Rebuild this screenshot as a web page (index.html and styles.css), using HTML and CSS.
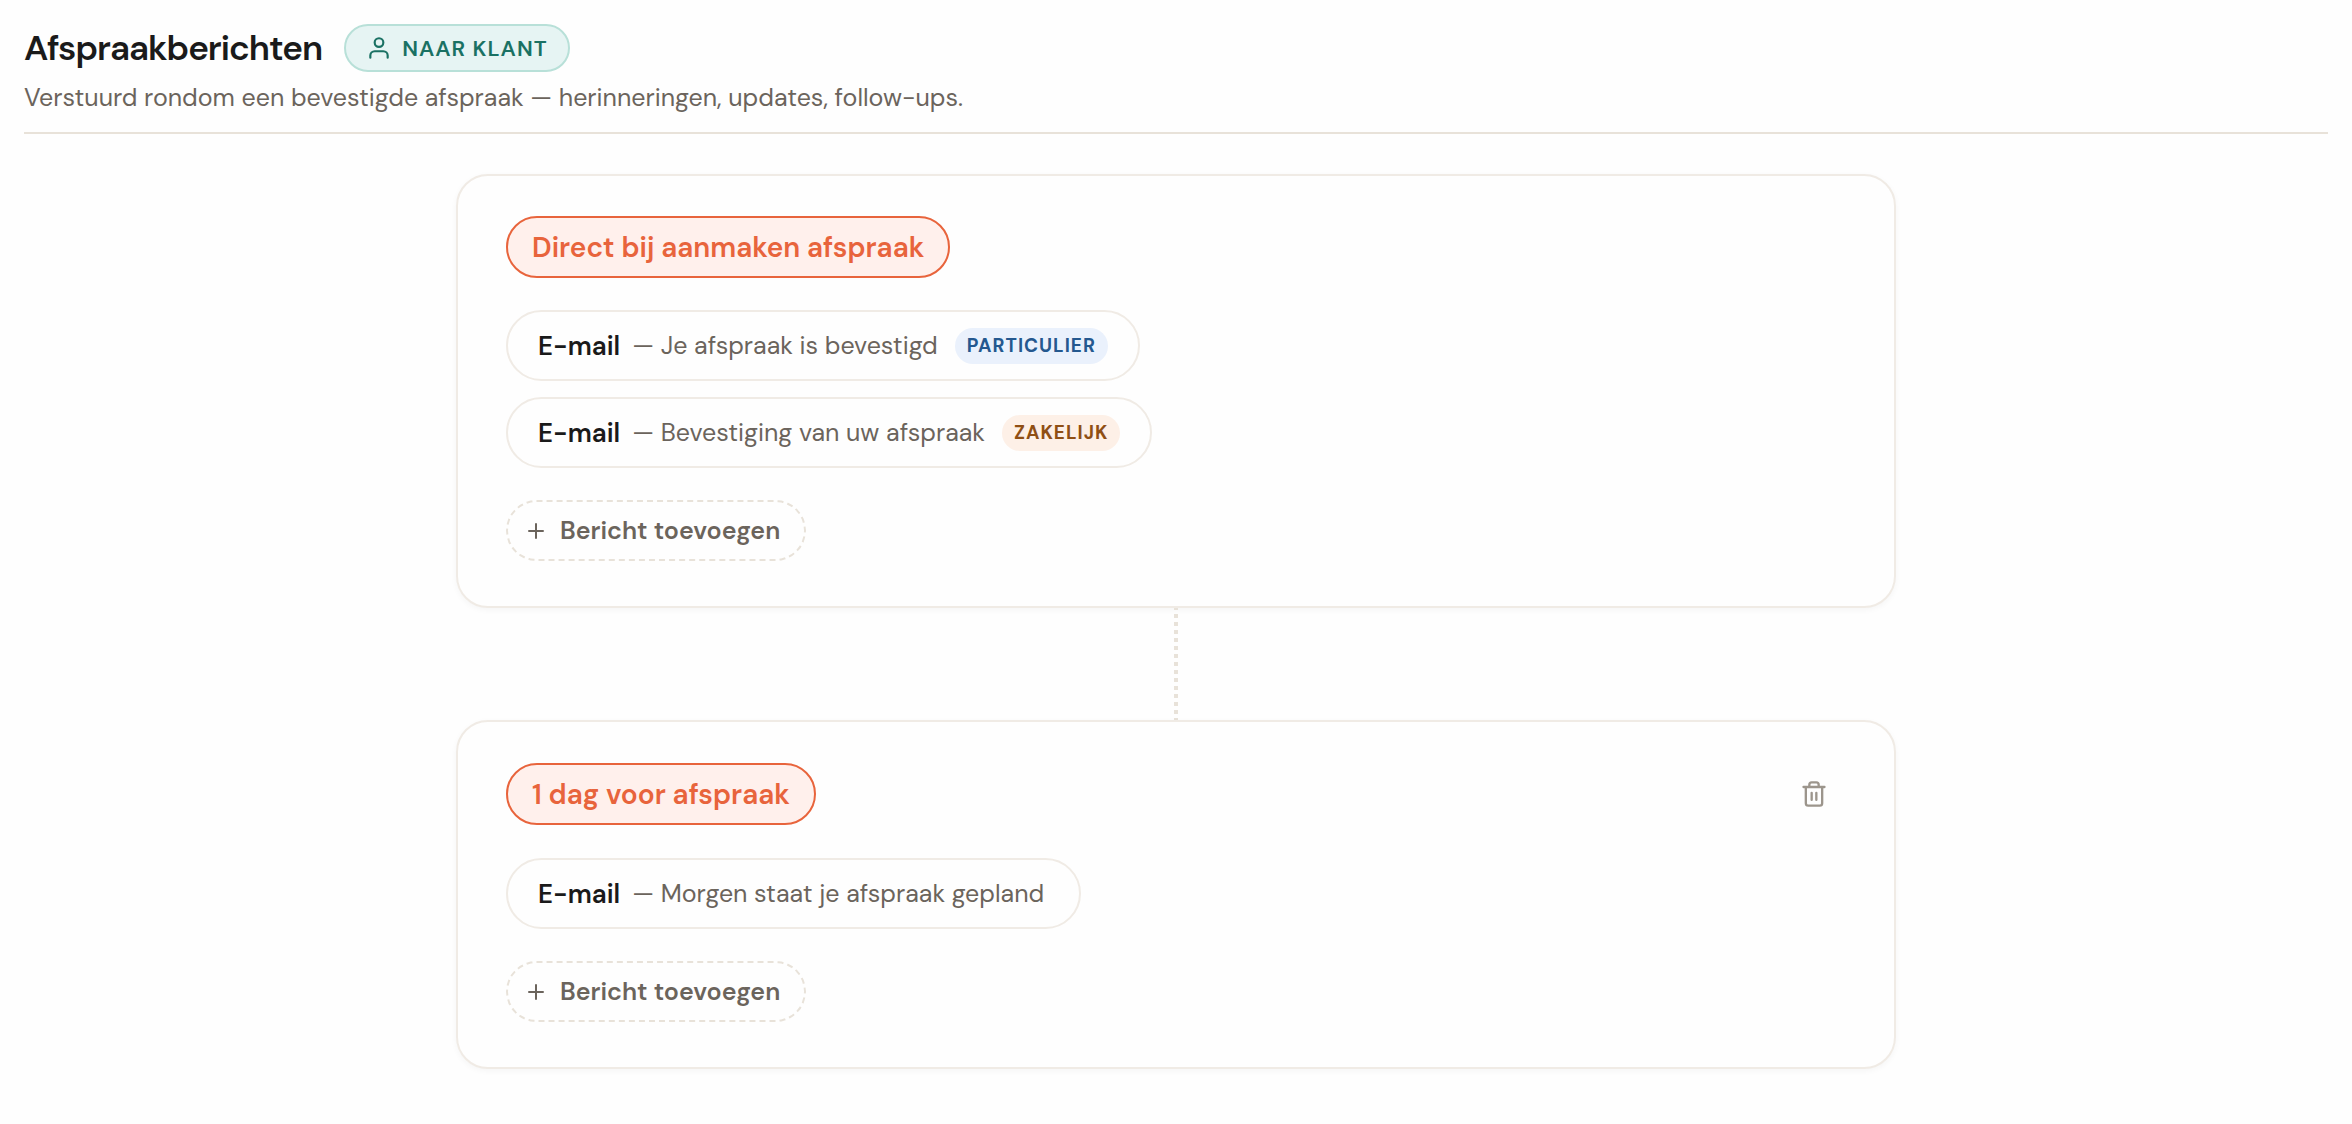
FILE: index.html
```html
<!DOCTYPE html>
<html lang="nl">
<head>
<meta charset="utf-8">
<meta name="viewport" content="width=device-width, initial-scale=1">
<title>Afspraakberichten</title>
<link rel="stylesheet" href="styles.css">
</head>
<body>
<main class="page">
  <header class="page-header">
    <div class="title-row">
      <h1 class="title">Afspraakberichten</h1>
      <span class="audience">
        <svg class="audience-icon" viewBox="0 0 24 24" aria-hidden="true"><path d="M20 21v-2a4 4 0 0 0-4-4H8a4 4 0 0 0-4 4v2"/><circle cx="12" cy="7" r="4"/></svg>
        NAAR KLANT
      </span>
    </div>
    <p class="subtitle">Verstuurd rondom een bevestigde afspraak — herinneringen, updates, follow-ups.</p>
  </header>

  <div class="timeline">
    <section class="card">
      <div class="card-head">
        <button type="button" class="moment">Direct bij aanmaken afspraak</button>
      </div>
      <div class="messages">
        <button type="button" class="message"><span class="channel">E-mail</span><span class="subject">— Je afspraak is bevestigd</span><span class="tag tag-private">PARTICULIER</span></button>
        <button type="button" class="message"><span class="channel">E-mail</span><span class="subject">— Bevestiging van uw afspraak</span><span class="tag tag-business">ZAKELIJK</span></button>
      </div>
      <button type="button" class="add"><svg class="add-icon" viewBox="0 0 24 24" aria-hidden="true"><path d="M12 5v14M5 12h14"/></svg>Bericht toevoegen</button>
    </section>

    <svg class="connector" viewBox="0 0 4 112" aria-hidden="true"><path d="M2 0v112"/></svg>

    <section class="card">
      <div class="card-head">
        <button type="button" class="moment">1 dag voor afspraak</button>
        <button type="button" class="delete" aria-label="Verwijderen"><svg class="delete-icon" viewBox="0 0 24 24" aria-hidden="true"><path d="M3 6h18M19 6v14a2 2 0 0 1-2 2H7a2 2 0 0 1-2-2V6M8 6V4a2 2 0 0 1 2-2h4a2 2 0 0 1 2 2v2M10 11v6M14 11v6"/></svg></button>
      </div>
      <div class="messages">
        <button type="button" class="message"><span class="channel">E-mail</span><span class="subject">— Morgen staat je afspraak gepland</span></button>
      </div>
      <button type="button" class="add"><svg class="add-icon" viewBox="0 0 24 24" aria-hidden="true"><path d="M12 5v14M5 12h14"/></svg>Bericht toevoegen</button>
    </section>
  </div>
</main>
</body>
</html>
```
FILE: styles.css
```css
* {
  box-sizing: border-box;
}

body {
  margin: 0;
  background: #fefefe;
  color: #1a1a1a;
  font-family: "DM Sans", Inter, sans-serif;
  font-size: 25px;
}

button {
  font: inherit;
  color: inherit;
  background: none;
  cursor: pointer;
}

svg {
  flex: none;
  fill: none;
  stroke: currentColor;
  stroke-width: 2;
  stroke-linecap: round;
  stroke-linejoin: round;
}

.page {
  padding: 24px;
}

.page-header {
  padding-bottom: 16px;
  border-bottom: 2px solid #e8e2d9;
}

.title-row {
  display: flex;
  align-items: center;
  gap: 22px;
}

.title {
  margin: 0;
  font-size: 35px;
  font-weight: 600;
  line-height: 46px;
  letter-spacing: -1px;
}

.audience {
  display: flex;
  align-items: center;
  gap: 10px;
  height: 48px;
  padding: 0 20px;
  border: 2px solid #b8e0d8;
  border-radius: 24px;
  background: #e6f4f3;
  color: #1a7163;
  font-size: 22px;
  font-weight: 600;
  letter-spacing: 1px;
}

.audience-icon {
  width: 26px;
  height: 26px;
}

.subtitle {
  margin: 8px 0 0;
  color: #6b645c;
  line-height: 36px;
}

.timeline {
  display: flex;
  flex-direction: column;
  align-items: center;
  padding-top: 40px;
}

.card {
  width: 100%;
  max-width: 1440px;
  padding: 40px 48px 45px;
  border: 2px solid #f0ebe5;
  border-radius: 32px;
  background: #fefefe;
  box-shadow: 0 2px 6px rgba(0, 0, 0, 0.04);
}

.card-head {
  display: flex;
  align-items: center;
  justify-content: space-between;
}

.moment {
  height: 62px;
  padding: 0 24px;
  border: 2px solid #e8643c;
  border-radius: 31px;
  background: #fff0ec;
  color: #e8643c;
  font-size: 28px;
  font-weight: 600;
}

.delete {
  display: flex;
  align-items: center;
  justify-content: center;
  width: 64px;
  height: 64px;
  padding: 0;
  border: 0;
  color: #9c958c;
}

.delete-icon {
  width: 28px;
  height: 28px;
}

.messages {
  display: flex;
  flex-direction: column;
  align-items: flex-start;
  gap: 16px;
  margin: 32px 0;
}

.message {
  display: flex;
  align-items: center;
  gap: 12px;
  height: 71px;
  padding: 0 30px;
  border: 2px solid #f0ebe5;
  border-radius: 36px;
}

.channel {
  font-size: 26px;
  font-weight: 600;
}

.subject {
  padding-right: 5px;
  color: #6b645c;
}

.tag {
  padding: 0 12px;
  border-radius: 18px;
  font-size: 19px;
  font-weight: 700;
  line-height: 36px;
  letter-spacing: 1px;
}

.tag-private {
  background: #eaf1fc;
  color: #24588f;
}

.tag-business {
  background: #fdf0e7;
  color: #8f4f14;
}

.add {
  display: flex;
  align-items: center;
  gap: 12px;
  height: 61px;
  padding: 0 24px 0 16px;
  border: 2px dashed #e8e2d9;
  border-radius: 31px;
  color: #6b645c;
  font-weight: 600;
}

.add-icon {
  width: 24px;
  height: 24px;
}

.connector {
  display: block;
  width: 4px;
  height: 112px;
  color: #e8e2d9;
  stroke-width: 4;
  stroke-linecap: butt;
  stroke-dasharray: 4 4;
  stroke-dashoffset: 2;
}
```
